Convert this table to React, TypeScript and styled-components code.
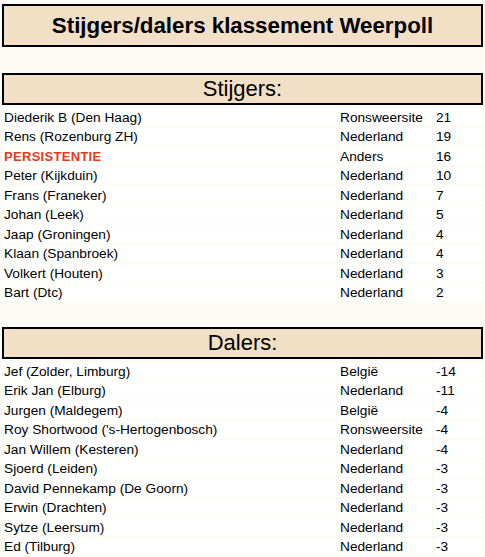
import React from "react";
import styled, { createGlobalStyle } from "styled-components";

const Global = createGlobalStyle`
  html, body { margin: 0; padding: 0; background: #fdfbf5; }
  body { font-family: "Liberation Sans", Arial, sans-serif; color: #000; }
`;

const Page = styled.div`
  padding: 4px 2px 0;
  display: flex;
  flex-direction: column;
`;

const TitleBox = styled.h1`
  margin: 0;
  height: 43px;
  box-sizing: border-box;
  border: 2px solid #000;
  background: #f1dfc6;
  display: flex;
  align-items: center;
  justify-content: center;
  font-size: 22.3px;
  font-weight: bold;
`;

const Section = styled.section`
  margin-top: 26px;
  display: flex;
  flex-direction: column;
  gap: 3px;
`;

const SectionHeader = styled.h2`
  margin: 0;
  height: 32px;
  box-sizing: border-box;
  border: 2px solid #000;
  background: #f1dfc6;
  display: flex;
  align-items: center;
  justify-content: center;
  font-size: 22px;
  font-weight: normal;
`;

const Rows = styled.div`
  display: flex;
  flex-direction: column;
  gap: 2px;
`;

const Row = styled.div`
  display: grid;
  grid-template-columns: 1fr 94px 49px;
  column-gap: 2px;
`;

const Cell = styled.div<{ $highlight?: boolean }>`
  background: #fff;
  box-sizing: border-box;
  height: 17.5px;
  padding: 1.5px 0 0 2px;
  line-height: 16px;
  font-size: ${(p) => (p.$highlight ? "13px" : "13.7px")};
  white-space: nowrap;
  overflow: hidden;
  color: ${(p) => (p.$highlight ? "#e8391c" : "#000")};
  font-weight: ${(p) => (p.$highlight ? "bold" : "normal")};
  letter-spacing: ${(p) => (p.$highlight ? "0.3px" : "normal")};
`;

type Entry = [string, string, string, boolean?];

const stijgers: Entry[] = [
  ["Diederik B (Den Haag)", "Ronsweersite", "21"],
  ["Rens (Rozenburg ZH)", "Nederland", "19"],
  ["PERSISTENTIE", "Anders", "16", true],
  ["Peter (Kijkduin)", "Nederland", "10"],
  ["Frans (Franeker)", "Nederland", "7"],
  ["Johan (Leek)", "Nederland", "5"],
  ["Jaap (Groningen)", "Nederland", "4"],
  ["Klaan (Spanbroek)", "Nederland", "4"],
  ["Volkert (Houten)", "Nederland", "3"],
  ["Bart (Dtc)", "Nederland", "2"],
];

const dalers: Entry[] = [
  ["Jef (Zolder, Limburg)", "België", "-14"],
  ["Erik Jan (Elburg)", "Nederland", "-11"],
  ["Jurgen (Maldegem)", "België", "-4"],
  ["Roy Shortwood ('s-Hertogenbosch)", "Ronsweersite", "-4"],
  ["Jan Willem (Kesteren)", "Nederland", "-4"],
  ["Sjoerd (Leiden)", "Nederland", "-3"],
  ["David Pennekamp (De Goorn)", "Nederland", "-3"],
  ["Erwin (Drachten)", "Nederland", "-3"],
  ["Sytze (Leersum)", "Nederland", "-3"],
  ["Ed (Tilburg)", "Nederland", "-3"],
];

const Table = ({ title, data }: { title: string; data: Entry[] }) => (
  <Section>
    <SectionHeader>{title}</SectionHeader>
    <Rows>
      {data.map(([name, site, score, hl], i) => (
        <Row key={i}>
          <Cell $highlight={hl}>{name}</Cell>
          <Cell>{site}</Cell>
          <Cell>{score}</Cell>
        </Row>
      ))}
    </Rows>
  </Section>
);

export default function App() {
  return (
    <Page>
      <Global />
      <TitleBox>Stijgers/dalers klassement Weerpoll</TitleBox>
      <Table title="Stijgers:" data={stijgers} />
      <Table title="Dalers:" data={dalers} />
    </Page>
  );
}
